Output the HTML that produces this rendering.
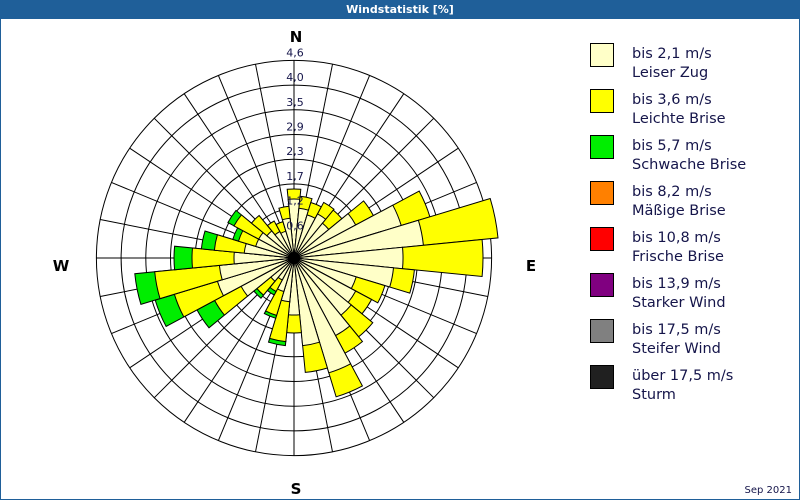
<!DOCTYPE html>
<html><head><meta charset="utf-8"><style>
body{margin:0;width:800px;height:500px;overflow:hidden;background:#fff;font-family:"DejaVu Sans","Liberation Sans",sans-serif}
#frame{position:absolute;left:0;top:0;width:798px;height:498px;border:1px solid #1f5f99}
#title{position:absolute;left:0;top:0;width:800px;height:19px;background:#1f5f99;color:#fff;font-weight:bold;font-size:11px;text-align:center;line-height:19px}
.lg{position:absolute;left:590px;width:22px;height:22px;border:1px solid #000}
.lt{position:absolute;left:632px;font-size:14.5px;line-height:19px;color:#15154a}
#date{position:absolute;right:8px;top:485px;font-size:10px;color:#15154a}
</style></head><body>
<div id="frame"></div>
<div id="title">Windstatistik [%]</div>
<svg id="s" width="800" height="500" style="position:absolute;left:0;top:0"></svg>
<div class="lg" style="top:43px;background:#ffffc8"></div><div class="lt" style="top:45px">bis 2,1 m/s<br>Leiser Zug</div>
<div class="lg" style="top:89px;background:#ffff00"></div><div class="lt" style="top:91px">bis 3,6 m/s<br>Leichte Brise</div>
<div class="lg" style="top:135px;background:#00ee00"></div><div class="lt" style="top:137px">bis 5,7 m/s<br>Schwache Brise</div>
<div class="lg" style="top:181px;background:#ff8000"></div><div class="lt" style="top:183px">bis 8,2 m/s<br>Mäßige Brise</div>
<div class="lg" style="top:227px;background:#ff0000"></div><div class="lt" style="top:229px">bis 10,8 m/s<br>Frische Brise</div>
<div class="lg" style="top:273px;background:#800080"></div><div class="lt" style="top:275px">bis 13,9 m/s<br>Starker Wind</div>
<div class="lg" style="top:319px;background:#808080"></div><div class="lt" style="top:321px">bis 17,5 m/s<br>Steifer Wind</div>
<div class="lg" style="top:365px;background:#202020"></div><div class="lt" style="top:367px">über 17,5 m/s<br>Sturm</div>
<div id="date">Sep 2021</div>
<script>
var s=document.getElementById('s'),cx=294,cy=258,h='';
var R=24.7,N=32,st=360/N;
for(var k=1;k<=8;k++)h+='<circle cx="'+cx+'" cy="'+cy+'" r="'+(R*k)+'" fill="none" stroke="#000" stroke-width="1"/>';
for(var i=0;i<N;i++){var t=i*st*Math.PI/180;h+='<line x1="'+cx+'" y1="'+cy+'" x2="'+(cx+197.6*Math.sin(t)).toFixed(1)+'" y2="'+(cy-197.6*Math.cos(t)).toFixed(1)+'" stroke="#000" stroke-width="1"/>';}
var d=[[59,69],[50,62],[45,58],[50,63],[45,62],[70,90],[112,142],[130,205],[109,189],[100,121],[65,95],[70,88],[74,102],[88,108],[120,145],[88,115],[57,75],[44,84,88],[35,60,63],[25,38,42],[30,48,52],[60,90,110],[80,125,145],[75,140,160],[60,102,120],[50,80,93],[40,58,64],[40,68,75],[35,55],[30,42],[28,38],[40,52]];
var col=['#ffffc8','#ffff00','#00ee00'];
function w(a,r,c){var a1=(a-st/2)*Math.PI/180,a2=(a+st/2)*Math.PI/180;return '<path d="M'+cx+' '+cy+'L'+(cx+r*Math.sin(a1)).toFixed(1)+' '+(cy-r*Math.cos(a1)).toFixed(1)+'A'+r+' '+r+' 0 0 1 '+(cx+r*Math.sin(a2)).toFixed(1)+' '+(cy-r*Math.cos(a2)).toFixed(1)+'Z" fill="'+c+'" stroke="#000" stroke-width="1"/>';}
for(var i=0;i<N;i++){var v=d[i];for(var j=v.length-1;j>=0;j--)h+=w(i*st,v[j],col[j]);}
h+='<circle cx="'+cx+'" cy="'+cy+'" r="6" fill="#000"/>';
var lb=['0,6','1,2','1,7','2,3','2,9','3,5','4,0','4,6'];
for(var k=0;k<8;k++)h+='<text x="'+(cx+1)+'" y="'+(cy-R*(k+1)-4)+'" font-size="11" text-anchor="middle" fill="#15154a" font-family="DejaVu Sans,sans-serif">'+lb[k]+'</text>';
h+='<g font-weight="bold" font-size="15" font-family="DejaVu Sans,sans-serif" text-anchor="middle"><text x="296" y="42">N</text><text x="531" y="271">E</text><text x="61" y="271">W</text><text x="296" y="494">S</text></g>';
s.innerHTML=h;
</script>
</body></html>
